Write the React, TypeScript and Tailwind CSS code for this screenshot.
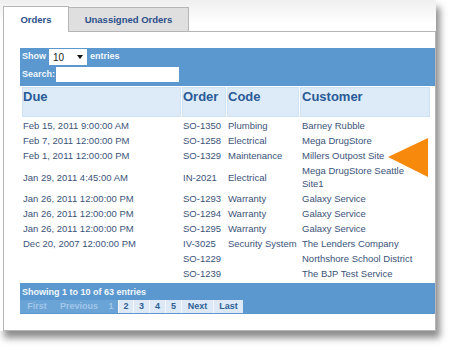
import React from "react";

type Row = { due: string; order: string; code: string; customer: string };

const rows: Row[] = [
  { due: "Feb 15, 2011 9:00:00 AM", order: "SO-1350", code: "Plumbing", customer: "Barney Rubble" },
  { due: "Feb 7, 2011 12:00:00 PM", order: "SO-1258", code: "Electrical", customer: "Mega DrugStore" },
  { due: "Feb 1, 2011 12:00:00 PM", order: "SO-1329", code: "Maintenance", customer: "Millers Outpost Site" },
  { due: "Jan 29, 2011 4:45:00 AM", order: "IN-2021", code: "Electrical", customer: "Mega DrugStore Seattle Site1" },
  { due: "Jan 26, 2011 12:00:00 PM", order: "SO-1293", code: "Warranty", customer: "Galaxy Service" },
  { due: "Jan 26, 2011 12:00:00 PM", order: "SO-1294", code: "Warranty", customer: "Galaxy Service" },
  { due: "Jan 26, 2011 12:00:00 PM", order: "SO-1295", code: "Warranty", customer: "Galaxy Service" },
  { due: "Dec 20, 2007 12:00:00 PM", order: "IV-3025", code: "Security System", customer: "The Lenders Company" },
  { due: "", order: "SO-1229", code: "", customer: "Northshore School District" },
  { due: "", order: "SO-1239", code: "", customer: "The BJP Test Service" },
];

const columns = "grid grid-cols-[159px_44px_72px_130px] gap-x-px";

export default function App() {
  return (
    <div className="relative w-[449px] h-[353px] bg-white font-['Liberation_Sans',Arial,sans-serif]">
      <div className="w-[436px] pl-[3px] pt-[6px] bg-[linear-gradient(#efefef,#ffffff_24px)] shadow-[4px_7px_7px_rgba(0,0,0,0.45)]">
        {/* tabs */}
        <div className="flex items-end h-[26px]">
          <div className="w-[66px] h-[26px] flex items-center justify-center pt-[2px] bg-white border-t border-l border-r border-[#b5b5b5] text-[9.5px] font-bold text-[#2b4f8a]">
            Orders
          </div>
          <div className="w-[120px] h-[25px] flex items-center justify-center pt-[2px] bg-[#dfdfdf] border-t border-r border-b border-[#b5b5b5] text-[9.5px] font-bold text-[#2b4f8a]">
            Unassigned Orders
          </div>
          <div className="flex-1 border-b border-[#b5b5b5]" />
        </div>

        {/* panel */}
        <div className="bg-white border-l border-r border-b border-[#b5b5b5] pl-4 pt-4 pb-4">
          <div className="bg-[#5b98cf]">
            {/* toolbar */}
            <div className="pl-[2px] pt-px pb-[4px] text-[9px] font-bold text-[#f2f7fc]">
              <div className="flex items-center gap-[3px] h-[16px]">
                <span>Show</span>
                <div className="relative w-[38px] h-[16px] bg-white flex items-center pl-[4px] text-[10px] font-normal text-[#222]">
                  10
                  <svg className="absolute left-[28px] top-[6px]" width="6" height="4" viewBox="0 0 6 4">
                    <polygon points="0,0 6,0 3,4" fill="#111" />
                  </svg>
                </div>
                <span>entries</span>
              </div>
              <div className="flex items-center gap-px h-[15px] mt-[2px]">
                <span>Search:</span>
                <div className="w-[123px] h-[15px] bg-white" />
              </div>
            </div>

            {/* table */}
            <div className="bg-white pl-[2px] pt-px pb-[2px]">
              <div className={`${columns} h-[30px]`}>
                {["Due", "Order", "Code", "Customer"].map((h, i) => (
                  <div
                    key={h}
                    className={`bg-[#ddebf9] border border-[#cfe2f4] pt-px text-[13px] leading-[15px] font-bold text-[#2a5a95] ${i === 3 ? "pl-[1px]" : "pl-0"}`}
                  >
                    {h}
                  </div>
                ))}
              </div>
              <div className="mt-px text-[9.5px] leading-[13px] text-[#3b5379]">
                {rows.map((r, i) => (
                  <div key={i} className={`${columns} items-center py-px`}>
                    <div className="pl-px whitespace-nowrap">{r.due}</div>
                    <div className="pl-px whitespace-nowrap">{r.order}</div>
                    <div className="pl-px whitespace-nowrap">{r.code}</div>
                    <div className="pl-[2px] pr-[6px]">{r.customer}</div>
                  </div>
                ))}
              </div>
            </div>

            {/* footer */}
            <div className="pt-[4px] pb-px">
              <div className="pl-[2px] text-[9px] leading-[11px] font-bold text-[#f2f7fc]">
                Showing 1 to 10 of 63 entries
              </div>
              <div className="flex h-[13px] mt-[2px] text-[9px] font-bold">
                <div className="w-[34px] flex items-center justify-center bg-[#6aa3d6] text-[#a3c7e8]">First</div>
                <div className="w-[50px] flex items-center justify-center bg-[#6aa3d6] text-[#a3c7e8]">Previous</div>
                <div className="w-[14px] flex items-center justify-center bg-[#6aa3d6] text-[#a3c7e8]">1</div>
                {[
                  { t: "2", w: "w-[15px]" },
                  { t: "3", w: "w-[16px]" },
                  { t: "4", w: "w-[16px]" },
                  { t: "5", w: "w-[16px]" },
                  { t: "Next", w: "w-[32px]" },
                  { t: "Last", w: "w-[30px]" },
                ].map((b) => (
                  <div
                    key={b.t}
                    className={`${b.w} flex items-center justify-center bg-[#dde9f6] border-l border-[#f4f8fc] text-[#2e5f96]`}
                  >
                    {b.t}
                  </div>
                ))}
              </div>
            </div>
          </div>
        </div>
      </div>

      {/* pointer arrow */}
      <svg className="absolute left-[386px] top-[136px]" width="44" height="44" viewBox="0 0 44 44">
        <polygon points="2,21 42,2 42,41" fill="#f7890d" />
      </svg>
    </div>
  );
}
